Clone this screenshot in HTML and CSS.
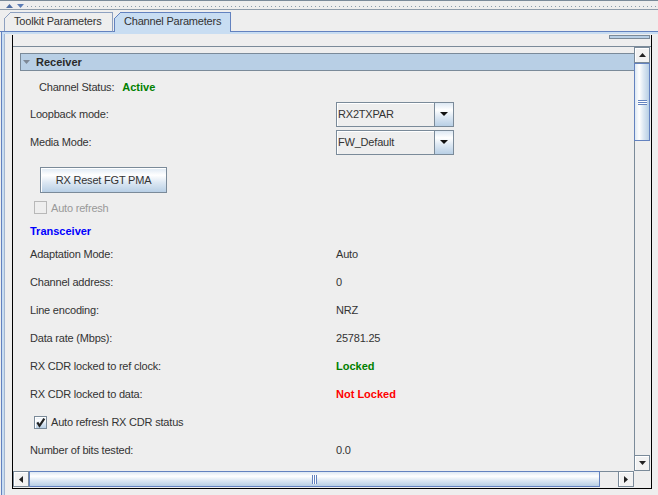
FILE: index.html
```html
<!DOCTYPE html>
<html>
<head>
<meta charset="utf-8">
<title>Channel Parameters</title>
<link rel="stylesheet" href="styles.css">
</head>
<body>
<div class="app">
  <div class="topbar">
    <svg class="mini-up" width="7" height="4" viewBox="0 0 7 4"><polygon points="0,4 3.5,0 7,4" fill="#4f6ea3"/></svg>
    <svg class="mini-down" width="7" height="4" viewBox="0 0 7 4"><polygon points="0,0 7,0 3.5,4" fill="#5b7cb5"/></svg>
    <span class="dots"></span>
  </div>
  <div class="tabbar">
    <div class="tab-edge"></div>
    <div class="tab">Toolkit Parameters</div>
    <div class="tab-gap"></div>
    <div class="tab sel">Channel Parameters</div>
    <div class="tab-fill"></div>
  </div>
  <div class="tabpanel">
    <div class="panel-inner">
      <div class="scrollpane">
        <div class="sp-top"><span class="sp-bar"></span></div>
        <div class="sp-main">
          <div class="viewport">
            <div class="content">
              <div class="section-head">
                <svg class="head-tri" width="7" height="4" viewBox="0 0 7 4"><polygon points="0,0 7,0 3.5,4" fill="#7d8896"/></svg>
                <span>Receiver</span>
              </div>
              <div class="rows">
                <div class="row status"><span>Channel Status:</span><span class="ok">Active</span></div>
                <div class="row"><span class="lbl">Loopback mode:</span>
                  <div class="combo"><span class="combo-text">RX2TXPAR</span><span class="combo-btn"><svg width="8" height="4" viewBox="0 0 8 4"><polygon points="0,0 8,0 4,4" fill="#111"/></svg></span></div>
                </div>
                <div class="row"><span class="lbl">Media Mode:</span>
                  <div class="combo"><span class="combo-text">FW_Default</span><span class="combo-btn"><svg width="8" height="4" viewBox="0 0 8 4"><polygon points="0,0 8,0 4,4" fill="#111"/></svg></span></div>
                </div>
                <div class="btn-row"><span class="button">RX Reset FGT PMA</span></div>
                <div class="row check-row"><span class="cb disabled"></span><span class="dis-text">Auto refresh</span></div>
                <div class="row trans"><span class="blue">Transceiver</span></div>
                <div class="row"><span class="lbl">Adaptation Mode:</span><span>Auto</span></div>
                <div class="row"><span class="lbl">Channel address:</span><span>0</span></div>
                <div class="row"><span class="lbl">Line encoding:</span><span>NRZ</span></div>
                <div class="row"><span class="lbl">Data rate (Mbps):</span><span>25781.25</span></div>
                <div class="row lower"><span class="lbl">RX CDR locked to ref clock:</span><span class="ok">Locked</span></div>
                <div class="row"><span class="lbl">RX CDR locked to data:</span><span class="bad">Not Locked</span></div>
                <div class="row check-row"><span class="cb"><svg width="11" height="11" viewBox="0 0 11 11"><path d="M2.3 5.4 L4.5 8.8 L9.3 1.6" fill="none" stroke="#222" stroke-width="2.2"/></svg></span><span>Auto refresh RX CDR status</span></div>
                <div class="row"><span class="lbl">Number of bits tested:</span><span>0.0</span></div>
              </div>
            </div>
          </div>
          <div class="vscroll">
            <span class="sbtn"><svg width="7" height="4" viewBox="0 0 7 4"><polygon points="0,4 3.5,0 7,4" fill="#222"/></svg></span>
            <span class="vthumb"><span class="vgrip"></span></span>
            <span class="vtrack"></span>
            <span class="sbtn"><svg width="7" height="4" viewBox="0 0 7 4"><polygon points="0,0 7,0 3.5,4" fill="#222"/></svg></span>
          </div>
        </div>
        <div class="sp-bottom">
          <div class="hscroll">
            <span class="sbtn"><svg width="4" height="7" viewBox="0 0 4 7"><polygon points="4,0 4,7 0,3.5" fill="#222"/></svg></span>
            <span class="hthumb"><span class="hgrip"></span></span>
            <span class="htrack"></span>
            <span class="sbtn"><svg width="4" height="7" viewBox="0 0 4 7"><polygon points="0,0 4,3.5 0,7" fill="#222"/></svg></span>
          </div>
          <div class="corner"></div>
        </div>
      </div>
    </div>
  </div>
</div>
</body>
</html>
```
FILE: styles.css
```css
* { box-sizing: border-box; }
html, body { margin: 0; padding: 0; }
body {
  width: 658px;
  height: 495px;
  overflow: hidden;
  background: #eeeeee;
  font-family: "Liberation Sans", Arial, sans-serif;
  font-size: 11px;
  letter-spacing: -0.2px;
  color: #333333;
}
.app { display: flex; flex-direction: column; height: 495px; }

/* top strip */
.topbar {
  height: 10px;
  flex: none;
  border-top: 1px solid #7a8a99;
  border-bottom: 1px solid #8e9cab;
  display: flex;
  align-items: flex-start;
}
.mini-up { margin: 3px 0 0 6px; flex: none; }
.mini-down { margin: 3px 0 0 4px; flex: none; }
.dots {
  flex: 1;
  height: 1px;
  margin: 5px 0 0 3px;
  background: repeating-linear-gradient(to right, #8a9aa8 0 1px, transparent 1px 4px);
}

/* tabs */
.tabbar { height: 22px; flex: none; display: flex; align-items: flex-end; }
.tabbar > div { height: 20px; border-bottom: 1px solid #6382bf; }
.tab-edge { width: 4px; }
.tab-gap { width: 1px; }
.tab-fill { flex: 1; }
.tab {
  width: 109px;
  padding-left: 10px;
  line-height: 19px;
  white-space: nowrap;
  border-right: 1px solid #8da0c0;
  background:
    linear-gradient(135deg, #eeeeee 4.3px, #8da0c0 4.3px, #8da0c0 5.5px, transparent 5.5px) 0 0 / 8px 8px no-repeat,
    linear-gradient(#8da0c0, #8da0c0) 0 0 / 100% 1px no-repeat,
    linear-gradient(#8da0c0, #8da0c0) 0 0 / 1px 100% no-repeat,
    #eeeeee;
}
.tabbar > .tab.sel {
  width: 117px;
  border-bottom: none;
  border-right-color: #6382bf;
  background:
    linear-gradient(135deg, #eeeeee 4.3px, #6382bf 4.3px, #6382bf 5.5px, transparent 5.5px) 0 0 / 8px 8px no-repeat,
    linear-gradient(#6382bf, #6382bf) 0 0 / 100% 1px no-repeat,
    linear-gradient(#6382bf, #6382bf) 0 0 / 1px 100% no-repeat,
    #c8ddf2;
}

/* tab content */
.tabpanel {
  flex: 1;
  display: flex;
  margin-left: 1px;
  border-left: 1px solid #6382bf;
  padding: 2px 0 0 2px;
  background: #c8ddf2;
}
.panel-inner {
  flex: 1;
  background: #eeeeee;
  border-left: 1px solid #a3b6d1;
  padding: 1px 0 0 7px;
}
.scrollpane {
  width: 640px;
  height: 454px;
  border: 1px solid #000;
  border-top: none;
  display: flex;
  flex-direction: column;
}
.sp-top { height: 11px; flex: none; }
.sp-bar {
  display: block;
  margin-left: 596px;
  width: 41px;
  height: 4px;
  border: 1px solid #7a8a99;
  background: #b8cfe5;
}
.sp-main {
  height: 425px;
  flex: none;
  display: flex;
  border-top: 1px solid #7a8a99;
  padding-right: 1px;
}
.viewport { width: 621px; height: 424px; overflow: hidden; flex: none; }
.content { width: 700px; padding-top: 6px; }

.section-head {
  margin-left: 7px;
  height: 18px;
  border: 1px solid #7a8a99;
  background: #b8cfe5;
  display: flex;
  align-items: center;
  padding-left: 2px;
  font-weight: bold;
  font-size: 11px;
  letter-spacing: 0;
  color: #2a2a2a;
}
.head-tri { margin-right: 6px; flex: none; }

.rows { padding-left: 17px; }
.row { display: flex; align-items: center; height: 28px; white-space: nowrap; }
.lbl { width: 306px; flex: none; }
.status { height: 27px; margin-top: 2px; padding-left: 9px; gap: 8px; }
.ok { color: #008000; font-weight: bold; letter-spacing: 0; }
.bad { color: #ff0000; font-weight: bold; letter-spacing: 0; }
.blue { color: #0000ff; font-weight: bold; letter-spacing: 0; }
.trans { height: 19px; }
.row.lower { height: 28px; }

.combo {
  width: 118px;
  height: 25px;
  border: 1px solid #7a8a99;
  display: flex;
  background: #eeeeee;
}
.combo-text { flex: 1; padding-left: 1px; line-height: 23px; box-shadow: inset 1px 1px #ffffff; }
.combo-btn {
  width: 19px;
  border-left: 1px solid #7a8a99;
  display: flex;
  align-items: center;
  justify-content: center;
  background: linear-gradient(to bottom, #dde8f3 0%, #ffffff 30%, #dde8f3 60%, #b8cfe5 100%);
}

.btn-row { height: 37px; padding-top: 11px; padding-left: 10px; }
.button {
  display: flex;
  align-items: center;
  justify-content: center;
  width: 127px;
  height: 26px;
  border: 1px solid #7a8a99;
  box-shadow: inset 1px 1px #ffffff;
  background: linear-gradient(to bottom, #dde8f3 0%, #ffffff 30%, #dde8f3 60%, #b8cfe5 100%);
}

.check-row { padding-left: 4px; gap: 4px; }
.btn-row + .check-row { margin-top: 1px; height: 27px; }
.cb {
  width: 13px;
  height: 13px;
  flex: none;
  border: 1px solid #7a8a99;
  box-shadow: inset 1px 1px #ffffff;
  background: linear-gradient(to bottom, #dde8f3 0%, #ffffff 30%, #dde8f3 60%, #b8cfe5 100%);
  display: flex;
  align-items: center;
  justify-content: center;
}
.cb.disabled { border-color: #b8b8b8; background: #eeeeee; box-shadow: none; }
.dis-text { color: #999999; }

/* scrollbars */
.vscroll { width: 16px; height: 424px; flex: none; display: flex; flex-direction: column; }
.sbtn {
  width: 16px;
  height: 16px;
  flex: none;
  border: 1px solid #7a8a99;
  box-shadow: inset 1px 1px #ffffff;
  background: #f2f2f2;
  display: flex;
  align-items: center;
  justify-content: center;
}
.vthumb {
  height: 78px;
  flex: none;
  border: 1px solid #6382bf;
  background: linear-gradient(to right, #dde8f3 0%, #ffffff 30%, #dde8f3 60%, #b8cfe5 100%);
  display: flex;
  align-items: center;
  justify-content: center;
}
.vgrip {
  width: 9px;
  height: 5px;
  background: repeating-linear-gradient(to bottom, #6382bf 0 1px, #ffffff 1px 2px);
}
.vtrack { flex: 1; border-left: 1px solid #7a8a99; background: #eeeeee; }

.sp-bottom { height: 17px; flex: none; display: flex; padding-bottom: 1px; }
.hscroll { width: 621px; height: 16px; flex: none; display: flex; }
.hthumb {
  width: 571px;
  flex: none;
  border: 1px solid #6382bf;
  background: linear-gradient(to bottom, #dde8f3 0%, #ffffff 30%, #dde8f3 60%, #b8cfe5 100%);
  display: flex;
  align-items: center;
  justify-content: center;
}
.hgrip {
  width: 5px;
  height: 9px;
  background: repeating-linear-gradient(to right, #6382bf 0 1px, #ffffff 1px 2px);
}
.htrack { flex: 1; border-top: 1px solid #7a8a99; background: #eeeeee; }
.corner { flex: 1; }
```
